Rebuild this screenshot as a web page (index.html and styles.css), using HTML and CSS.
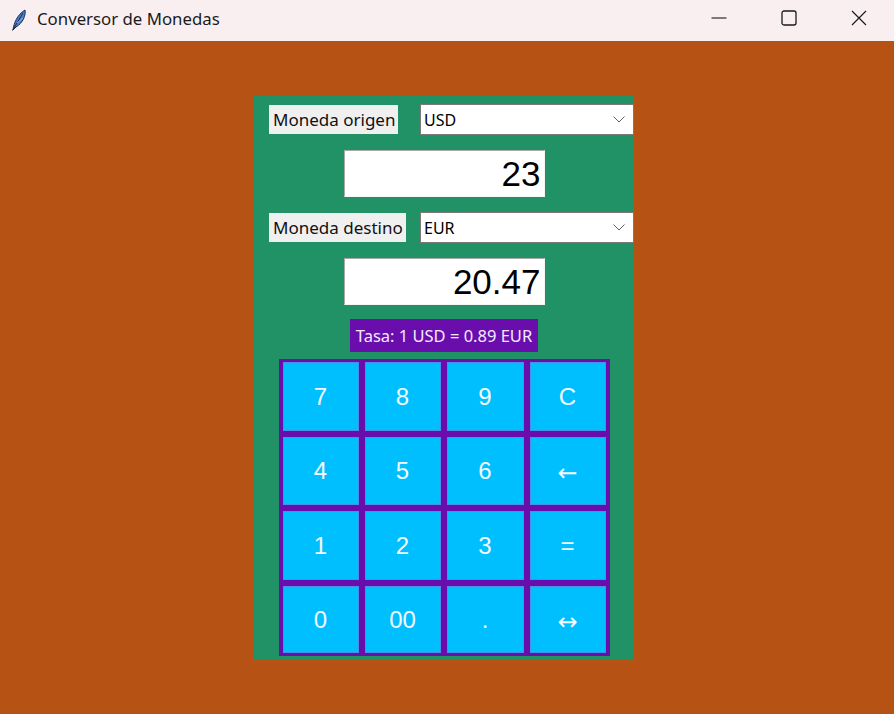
FILE: index.html
```html
<!DOCTYPE html>
<html>
<head>
<meta charset="utf-8">
<link rel="stylesheet" href="styles.css">
</head>
<body>
<div class="titlebar">
  <svg class="appicon" width="16" height="22" viewBox="0 0 16 22">
    <path d="M2 21 C3 14 6 6 14 1 C15 6 12 14 5 18 Z" fill="#4a7fd0" stroke="#1d2c4a" stroke-width="1"/>
    <path d="M1.5 21.5 L12 4" stroke="#1d2c4a" stroke-width="1" fill="none"/>
    <path d="M6 14 L12 9" stroke="#9cc0f0" stroke-width="0.8" fill="none"/>
  </svg>
  <span class="title">Conversor de Monedas</span>
  <div class="controls">
    <div class="ctl"><svg width="16" height="16" viewBox="0 0 16 16"><path d="M0.5 8 H15.5" stroke="#1a1a1a" stroke-width="1.1"/></svg></div>
    <div class="ctl"><svg width="16" height="16" viewBox="0 0 16 16"><rect x="1" y="1" width="14" height="14" rx="2" fill="none" stroke="#1a1a1a" stroke-width="1.3"/></svg></div>
    <div class="ctl"><svg width="16" height="16" viewBox="0 0 16 16"><path d="M1 1 L15 15 M15 1 L1 15" stroke="#1a1a1a" stroke-width="1.2"/></svg></div>
  </div>
</div>
<div class="main">
  <div class="panel">
    <div class="row">
      <span class="lbl">Moneda origen</span>
      <div class="combo"><span>USD</span><svg width="12" height="7" viewBox="0 0 12 7"><path d="M0.5 0.5 L6 6 L11.5 0.5" fill="none" stroke="#606060" stroke-width="1"/></svg></div>
    </div>
    <div class="entry">23</div>
    <div class="row">
      <span class="lbl">Moneda destino</span>
      <div class="combo"><span>EUR</span><svg width="12" height="7" viewBox="0 0 12 7"><path d="M0.5 0.5 L6 6 L11.5 0.5" fill="none" stroke="#606060" stroke-width="1"/></svg></div>
    </div>
    <div class="entry">20.47</div>
    <div class="rate">Tasa: 1 USD = 0.89 EUR</div>
    <div class="pad">
      <div class="key">7</div><div class="key">8</div><div class="key">9</div><div class="key">C</div>
      <div class="key">4</div><div class="key">5</div><div class="key">6</div><div class="key arrow">←</div>
      <div class="key">1</div><div class="key">2</div><div class="key">3</div><div class="key">=</div>
      <div class="key">0</div><div class="key">00</div><div class="key">.</div><div class="key arrow">↔</div>
    </div>
  </div>
</div>
</body>
</html>
```
FILE: styles.css
```css
html, body {
  margin: 0;
  padding: 0;
}
body {
  width: 894px;
  height: 714px;
  overflow: hidden;
  font-family: "Noto Sans", "Open Sans", sans-serif;
}
.titlebar {
  height: 41px;
  background: #f9eff1;
  display: flex;
  align-items: center;
}
.appicon {
  margin-left: 11px;
  margin-top: -2px;
}
.title {
  margin-left: 10px;
  font-size: 16.8px;
  color: #1a1a1a;
  margin-top: -4px;
}
.controls {
  margin-left: auto;
  display: flex;
  height: 41px;
  margin-top: -6px;
}
.ctl {
  width: 70px;
  display: flex;
  align-items: center;
  justify-content: center;
}
.main {
  height: 673px;
  background: #b65213;
  padding-top: 55px;
  padding-left: 254px;
  box-sizing: border-box;
}
.panel {
  width: 380px;
  height: 564px;
  background: #219266;
  display: flex;
  flex-direction: column;
  align-items: center;
  padding-top: 8px;
  box-sizing: border-box;
}
.row {
  width: 380px;
  box-sizing: border-box;
  padding-left: 15px;
  display: grid;
  grid-template-columns: 151px 214px;
  align-items: center;
  height: 31px;
}
.lbl {
  justify-self: start;
  background: #f0f0f0;
  height: 29px;
  line-height: 29px;
  padding: 0 3px 0 4px;
  font-size: 17px;
  color: #111;
}
.combo {
  height: 31px;
  box-sizing: border-box;
  background: #fff;
  border: 1px solid #7a7a7a;
  display: flex;
  align-items: center;
  padding-left: 3px;
  padding-right: 8px;
  font-size: 16px;
  color: #000;
}
.combo svg {
  margin-left: auto;
}
.entry {
  margin-top: 15px;
  width: 201px;
  height: 47px;
  box-sizing: border-box;
  background: #fff;
  border-style: solid;
  border-width: 1px;
  border-color: #a9a9a9 #f4f4f4 #f4f4f4 #a9a9a9;
  font-family: "Liberation Sans", Arial, sans-serif;
  font-size: 35px;
  line-height: 45px;
  text-align: right;
  padding-right: 3px;
  color: #000;
}
.entry + .row {
  margin-top: 15px;
}
.rate {
  margin-top: 14px;
  width: 188px;
  height: 33px;
  line-height: 33px;
  background: #6a0dad;
  color: #f2eaff;
  font-size: 16.5px;
  text-align: center;
}
.pad {
  margin-top: 7px;
  background: #6a0dad;
  padding: 3px 4px 3px 4px;
  display: grid;
  grid-template-columns: 76px 76px 77px 76px;
  grid-template-rows: 69px 68px 69px 67px;
  gap: 6px;
}
.key {
  background: #00bfff;
  border: 1px solid #4a8fe6;
  box-sizing: border-box;
  display: flex;
  align-items: center;
  justify-content: center;
  color: #f2f8ff;
  font-family: "Liberation Sans", Arial, sans-serif;
  font-size: 24px;
}
.key.arrow {
  font-family: "DejaVu Sans", sans-serif;
  font-size: 24px;
  padding-top: 4px;
}
```
